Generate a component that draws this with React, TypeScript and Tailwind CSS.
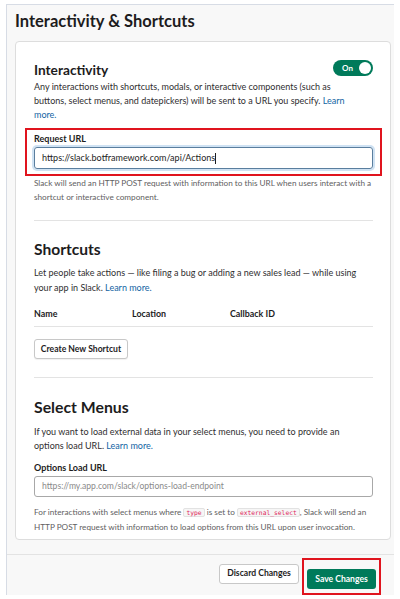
export default function App() {
  return (
    <div className="w-[400px] h-[599px] bg-white font-['Lato','Liberation_Sans',sans-serif] text-[#1d1c1d] overflow-hidden">
      <div className="ml-[6px] mt-[4px] w-[388px] h-[591px] border-l border-t border-[#d7dce5] bg-[#f8f8f8] flex flex-col">
        <h1 className="pl-[8px] mt-[6px] h-[20px] text-[16.5px] font-bold leading-[20px]">
          Interactivity &amp; Shortcuts
        </h1>

        {/* card */}
        <div className="mt-[10px] ml-[8px] w-[376px] h-[502px] rounded-[4px] border border-[#dddddd] bg-white pl-[18px] pr-[17px] pt-[19px]">
          {/* Interactivity */}
          <div className="flex items-start justify-between h-[18px]">
            <h2 className="text-[13.7px] font-bold leading-[18px]">Interactivity</h2>
            <div className="-mt-[1px] flex items-center h-[16px] w-[40px] rounded-full bg-[#007a5a] pl-[9px] pr-[2px] justify-between">
              <span className="text-[8px] font-bold text-white leading-none">On</span>
              <span className="h-[12px] w-[12px] rounded-full bg-white" />
            </div>
          </div>
          <p className="mt-[1px] max-w-[327px] text-[9px] leading-[14px] text-[#2f2e2f]">
            Any interactions with shortcuts, modals, or interactive components (such as buttons, select menus, and datepickers) will be sent to a URL you specify.{' '}
            <span className="text-[#1264a3]">Learn more.</span>
          </p>

          <div className="mt-[6px] -mx-[9px] border-2 border-[#e0141e] px-[7px] pt-[3px] pb-[5px]">
            <div className="text-[9px] font-bold leading-[12px]">Request URL</div>
            <div className="mt-[2px] h-[22px] rounded-[3px] border border-[#5a7e9e] shadow-[0_0_0_2px_#cfe2f3] flex items-center px-[7px] text-[9px]">
              https://slack.botframework.com/api/Actions
              <span className="h-[11px] w-px bg-[#1d1c1d]" />
            </div>
          </div>
          <p className="mt-0 text-[8.2px] leading-[14px] text-[#616061]">
            Slack will send an HTTP POST request with information to this URL when users interact with a shortcut or interactive component.
          </p>

          <div className="mt-[16px] border-t border-[#e3e3e3]" />

          {/* Shortcuts */}
          <h2 className="mt-[18px] text-[15.6px] font-bold leading-[20px]">Shortcuts</h2>
          <p className="mt-[7px] max-w-[327px] text-[9px] leading-[14.5px] text-[#2f2e2f]">
            Let people take actions — like filing a bug or adding a new sales lead — while using your app in Slack.{' '}
            <span className="text-[#1264a3]">Learn more.</span>
          </p>
          <div className="mt-[12px] flex text-[8.9px] font-bold leading-[14px] pb-[5px] border-b border-[#e3e3e3]">
            <span className="w-[98px]">Name</span>
            <span className="w-[98px]">Location</span>
            <span>Callback ID</span>
          </div>
          <button className="mt-[12px] h-[20px] w-[94px] rounded-[3px] border border-[#c8c8c8] bg-white text-[8.6px] font-bold leading-none shadow-[0_1px_1px_rgba(0,0,0,0.06)]">
            Create New Shortcut
          </button>

          <div className="mt-[18px] border-t border-[#e3e3e3]" />

          {/* Select Menus */}
          <h2 className="mt-[19px] text-[15.8px] font-bold leading-[20px]">Select Menus</h2>
          <p className="mt-[8px] max-w-[327px] text-[9px] leading-[14px] text-[#2f2e2f]">
            If you want to load external data in your select menus, you need to provide an options load URL.{' '}
            <span className="text-[#1264a3]">Learn more.</span>
          </p>
          <div className="mt-[9px] text-[9px] font-bold leading-[12px]">Options Load URL</div>
          <div className="mt-[2px] h-[21px] rounded-[3px] border border-[#a8a8a8] flex items-center px-[7px] text-[8.6px] text-[#8a8a8a]">
            https://my.app.com/slack/options-load-endpoint
          </div>
          <p className="mt-[8px] text-[8.2px] leading-[14px] text-[#616061]">
            For interactions with select menus where{' '}
            <code className="px-[2px] rounded-[2px] border border-[#e2e2e2] bg-[#f6f6f6] text-[#e01e5a] text-[6.3px] font-['DejaVu_Sans_Mono',monospace]">type</code>{' '}
            is set to{' '}
            <code className="px-[2px] rounded-[2px] border border-[#e2e2e2] bg-[#f6f6f6] text-[#e01e5a] text-[6.3px] font-['DejaVu_Sans_Mono',monospace]">external_select</code>
            , Slack will send an HTTP POST request with information to load options from this URL upon user invocation.
          </p>
        </div>

        {/* footer */}
        <div className="mt-[14px] flex-1 border-t border-[#e3e3e3] flex justify-end items-start pt-[3px] pr-[13px] gap-[3px]">
          <button className="mt-[6px] h-[20px] w-[80px] rounded-[3px] border border-[#c8c8c8] bg-white text-[8.6px] font-bold leading-none">
            Discard Changes
          </button>
          <div className="border-2 border-[#e0141e] px-[3px] py-[4px]">
            <button className="h-[20px] w-[69px] rounded-[3px] bg-[#007a5a] text-white text-[8.6px] font-bold leading-none">
              Save Changes
            </button>
          </div>
        </div>
      </div>
    </div>
  );
}
